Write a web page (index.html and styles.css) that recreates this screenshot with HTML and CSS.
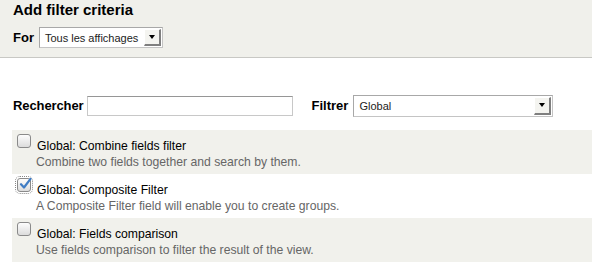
FILE: index.html
```html
<!DOCTYPE html>
<html lang="fr">
<head>
  <meta charset="UTF-8" />
  <title>Add filter criteria</title>
  <link rel="stylesheet" href="styles.css">
</head>
<body>
  <div class="top">
    <h1>Add filter criteria</h1>
    <div class="for-row">
      <label>For</label>
      <span class="select for-select">
        <span class="value">Tous les affichages</span>
        <span class="arrow"><span class="tri"></span></span>
      </span>
    </div>
  </div>

  <div class="search-row">
    <label class="search-label">Rechercher</label>
    <span class="textbox"></span>
    <label class="filter-label">Filtrer</label>
    <span class="select filter-select">
      <span class="value">Global</span>
      <span class="arrow"><span class="tri"></span></span>
    </span>
  </div>

  <div class="list">
    <div class="item odd">
      <span class="check"></span>
      <div class="text">
        <div class="name">Global: Combine fields filter</div>
        <div class="desc">Combine two fields together and search by them.</div>
      </div>
    </div>
    <div class="item">
      <span class="check checked">
        <svg width="14" height="14" viewBox="0 0 14 14"><path d="M3 7.2 L6 10.5 L12.5 1.8" fill="none" stroke="#3f7cc4" stroke-width="2.2" stroke-linecap="round" stroke-linejoin="round"/></svg>
      </span>
      <div class="text">
        <div class="name">Global: Composite Filter</div>
        <div class="desc">A Composite Filter field will enable you to create groups.</div>
      </div>
    </div>
    <div class="item odd">
      <span class="check"></span>
      <div class="text">
        <div class="name">Global: Fields comparison</div>
        <div class="desc">Use fields comparison to filter the result of the view.</div>
      </div>
    </div>
  </div>
</body>
</html>
```

FILE: styles.css
```css
html, body {
  margin: 0;
  padding: 0;
  background: #fff;
  color: #000;
  font-family: "Liberation Sans", Arial, sans-serif;
}
.top {
  background: #f0f0eb;
  border-bottom: 1px solid #c8c8c4;
  padding: 0 12px 0 13px;
  height: 57px;
}
h1 {
  margin: 0;
  padding-top: 1px;
  font-size: 15px;
  line-height: 17px;
}
.for-row {
  display: flex;
  align-items: center;
  gap: 6px;
  margin-top: 9px;
}
label {
  font-weight: bold;
  font-size: 13px;
}
.select {
  display: flex;
  align-items: stretch;
  background: #fff;
  border: 1px solid #c4c4c4;
  border-top-color: #a8a8a8;
  border-left-color: #a8a8a8;
  box-sizing: border-box;
}
.select .value {
  flex: 1;
  font-size: 11px;
  color: #222;
  display: flex;
  align-items: center;
  padding-left: 5px;
}
.select .arrow {
  width: 14px;
  margin: 1px;
  background: #f4f4f0;
  border-right: 2px solid #7f7f7f;
  border-bottom: 2px solid #7f7f7f;
  border-left: 1px solid #fff;
  border-top: 1px solid #fff;
  display: flex;
  align-items: center;
  justify-content: center;
}
.select .tri {
  width: 0;
  height: 0;
  border-left: 3px solid transparent;
  border-right: 3px solid transparent;
  border-top: 4px solid #000;
}
.for-select {
  width: 124px;
  height: 21px;
  margin-left: -1px;
}
.search-row {
  display: flex;
  align-items: center;
  padding: 36px 0 0 13px;
  height: 23px;
}
.search-label {
  letter-spacing: -0.1px;
}
.textbox {
  width: 206px;
  height: 20px;
  margin-left: 3px;
  box-sizing: border-box;
  border: 1px solid #c8c8c8;
  border-top-color: #969696;
}
.filter-label {
  margin-left: 19px;
}
.filter-select {
  width: 200px;
  height: 22px;
  margin-left: 5px;
}
.list {
  margin: 13px 0 0 12px;
}
.item {
  display: flex;
  height: 44px;
  padding: 3px 0 0 5px;
  box-sizing: border-box;
}
.item.odd {
  background: #f1f1ec;
}
.check {
  width: 14px;
  height: 14px;
  box-sizing: border-box;
  border: 1px solid #8a8a8a;
  border-radius: 3px;
  background: linear-gradient(#fdfdfd, #dcdcdc);
  margin-top: 1px;
  position: relative;
  flex: none;
}
.check.checked {
  outline: 1px dotted #888;
  outline-offset: 1px;
}
.check svg {
  position: absolute;
  left: 0;
  top: -2px;
}
.text {
  margin-left: 6px;
}
.name {
  font-size: 12.2px;
  line-height: 16px;
  margin-top: 5px;
}
.desc {
  font-size: 12.2px;
  line-height: 16px;
  color: #666;
  margin-left: -1px;
}
```
